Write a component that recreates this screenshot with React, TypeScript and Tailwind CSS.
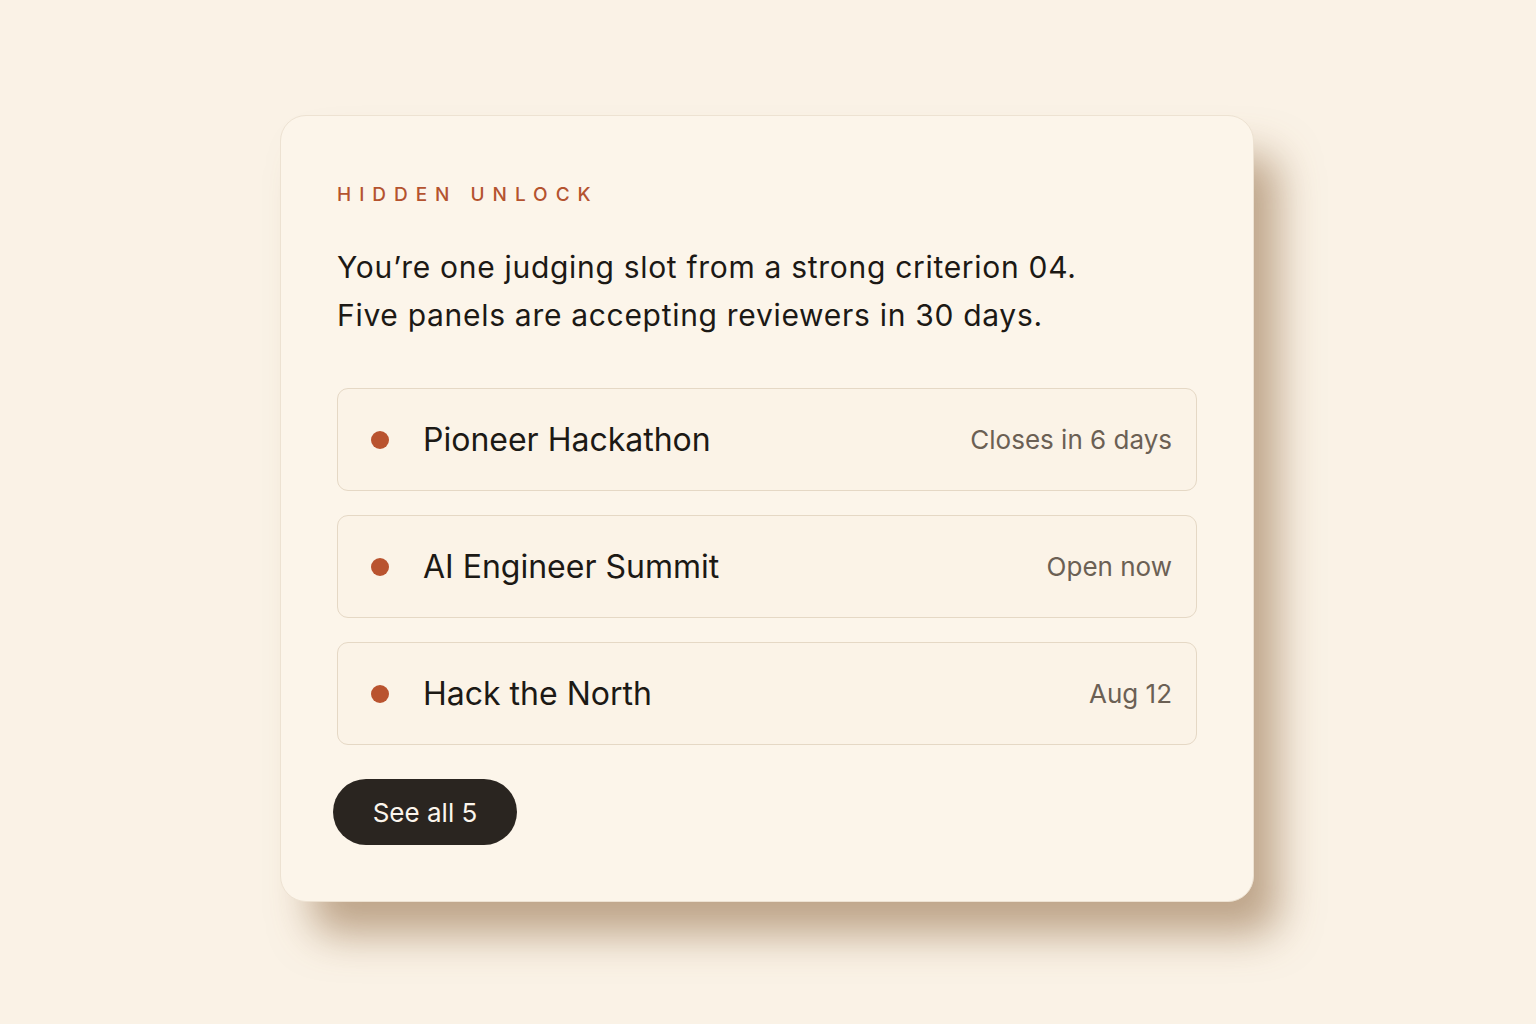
import React from "react";

interface Panel {
  name: string;
  status: string;
}

const PANELS: Panel[] = [
  { name: "Pioneer Hackathon", status: "Closes in 6 days" },
  { name: "AI Engineer Summit", status: "Open now" },
  { name: "Hack the North", status: "Aug 12" },
];

export default function App() {
  return (
    <div
      className="w-[1536px] h-[1024px] bg-[#faf2e6] flex items-start justify-start pl-[280px] pt-[115px]"
      style={{ fontFamily: "Inter, 'Noto Sans', sans-serif" }}
    >
      {/* Card */}
      <div className="w-[974px] h-[787px] rounded-[26px] bg-[#fcf5ea] border border-[#ede2d2] shadow-[28px_36px_42px_-4px_rgba(140,100,60,0.55)] px-[56px] pt-[69px] flex flex-col">
        <div className="text-[19px] font-medium tracking-[0.42em] text-[#b4532f] leading-none">HIDDEN UNLOCK</div>

        <p className="mt-[39px] text-[30px] leading-[48px] text-[#1c1915] tracking-[0.7px]">
          You’re one judging slot from a strong criterion 04.
          <br />
          Five panels are accepting reviewers in 30 days.
        </p>

        {/* Panel list */}
        <div className="mt-[49px] flex flex-col gap-[24px]">
          {PANELS.map((p) => (
            <div
              key={p.name}
              className="h-[103px] rounded-[11px] border border-[#e5d8c5] bg-[#fbf3e7] flex items-center pl-[33px] pr-[24px]"
            >
              <span className="w-[18px] h-[18px] rounded-full bg-[#b9532f] shrink-0" />
              <span className="ml-[34px] text-[32px] text-[#1c1915]">{p.name}</span>
              <span className="ml-auto text-[26px] text-[#6b6054]">{p.status}</span>
            </div>
          ))}
        </div>

        <button className="mt-[34px] -ml-[4px] w-[184px] h-[66px] rounded-full bg-[#2a2520] text-[#fbf5ec] text-[26px] flex items-center justify-center">
          See all 5
        </button>
      </div>
    </div>
  );
}
